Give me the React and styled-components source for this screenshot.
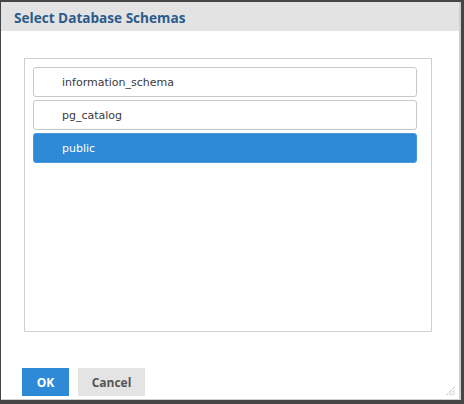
import styled, { createGlobalStyle } from "styled-components"

const Global = createGlobalStyle`
  html, body {
    margin: 0;
    padding: 0;
    background: #454545;
  }
  body {
    padding: 2px 3px 4px 1px;
    font-family: "DejaVu Sans", Verdana, sans-serif;
  }
`

const Dialog = styled.div`
  width: 460px;
  height: 398px;
  box-sizing: border-box;
  background: #fff;
  border-right: 2px solid #d0d0d0;
  border-bottom: 1px solid #d0d0d0;
  display: flex;
  flex-direction: column;
  position: relative;
`

const Header = styled.div`
  height: 29px;
  background: #e3e3e3;
  display: flex;
  align-items: center;
  padding: 1px 0 0 13px;
  box-sizing: border-box;
  font-family: "Open Sans", "DejaVu Sans", sans-serif;
  font-weight: 700;
  font-size: 13.6px;
  color: #2b5b8a;
`

const Body = styled.div`
  flex: 1;
  display: flex;
  flex-direction: column;
  padding: 27px 0 0 23px;
`

const ListBox = styled.div`
  width: 408px;
  height: 274px;
  box-sizing: border-box;
  border: 1px solid #cfcfcf;
  padding: 8px 14px 8px 8px;
  display: flex;
  flex-direction: column;
  gap: 3px;
`

const Item = styled.div`
  height: 30px;
  box-sizing: border-box;
  border: 1px solid ${(p) => (p.$selected ? "#4a98dc" : "#c8c8c8")};
  border-radius: 3px;
  background: ${(p) => (p.$selected ? "#2e8ad6" : "#fff")};
  color: ${(p) => (p.$selected ? "#fff" : "#3a3a3a")};
  font-size: 11px;
  display: flex;
  align-items: center;
  padding: 1px 0 0 28px;
`

const Footer = styled.div`
  display: flex;
  gap: 9px;
  margin-top: 36px;
  margin-left: -2px;
`

const Button = styled.button`
  height: 28px;
  border: none;
  border-radius: 0;
  padding: 0;
  font-family: "Open Sans", "DejaVu Sans", sans-serif;
  font-weight: 700;
  font-size: 12px;
  background: ${(p) => (p.$primary ? "#2e8ad6" : "#e4e4e4")};
  color: ${(p) => (p.$primary ? "#fff" : "#555")};
  width: ${(p) => p.$w}px;
`

const Grip = styled.svg`
  position: absolute;
  right: 4px;
  bottom: 3px;
`

const schemas = ["information_schema", "pg_catalog", "public"]

export default function App() {
  return (
    <>
      <Global />
      <Dialog>
        <Header>Select Database Schemas</Header>
        <Body>
          <ListBox>
            {schemas.map((s) => (
              <Item key={s} $selected={s === "public"}>
                {s}
              </Item>
            ))}
          </ListBox>
          <Footer>
            <Button $primary $w={47}>OK</Button>
            <Button $w={67}>Cancel</Button>
          </Footer>
        </Body>
        <Grip width="10" height="10" viewBox="0 0 10 10">
          <g stroke="#888" strokeWidth="1" strokeDasharray="1 1">
            <line x1="9.5" y1="1" x2="1" y2="9.5" />
            <line x1="9.5" y1="4" x2="4" y2="9.5" />
            <line x1="9.5" y1="7" x2="7" y2="9.5" />
          </g>
        </Grip>
      </Dialog>
    </>
  )
}
